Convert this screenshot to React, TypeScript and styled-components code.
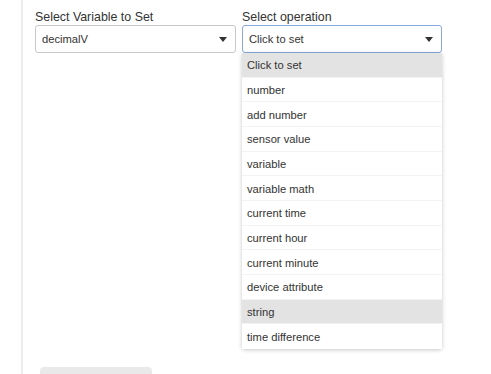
import styled, { createGlobalStyle } from "styled-components";

const GlobalStyle = createGlobalStyle`
  html, body {
    margin: 0;
    padding: 0;
    background: #ffffff;
    font-family: "Liberation Sans", Arial, sans-serif;
    color: #333333;
  }
`;

const Page = styled.div`
  height: 374px;
  overflow: hidden;
  margin-left: 21px;
  border-left: 2px solid #ececec;
  padding: 9px 0 0 12px;
`;

const Row = styled.div`
  display: grid;
  grid-template-columns: 201px 200px;
  column-gap: 6px;
`;

const Field = styled.div`
  position: relative;
  display: flex;
  flex-direction: column;
`;

const Label = styled.label`
  font-size: 12.4px;
  line-height: 16px;
  color: #333;
`;

const SelectBox = styled.div<{ focused?: boolean }>`
  height: 28px;
  box-sizing: border-box;
  border: 1px solid ${({ focused }) => (focused ? "#88a9dd" : "#c8c8c8")};
  border-radius: 3px;
  display: flex;
  align-items: center;
  justify-content: space-between;
  padding: 0 8px 0 6px;
  font-size: 11.2px;
  color: #333;
  background: #fff;
`;

const Caret = styled.span`
  width: 0;
  height: 0;
  border-left: 4px solid transparent;
  border-right: 4px solid transparent;
  border-top: 5px solid #333;
`;

const Menu = styled.ul`
  position: absolute;
  top: 44px;
  left: 0;
  right: 0;
  margin: 0;
  padding: 0;
  list-style: none;
  background: #fff;
  border-radius: 0 0 3px 3px;
  box-shadow: 0 1px 4px rgba(0, 0, 0, 0.22);
  z-index: 2;
`;

const Option = styled.li<{ active?: boolean }>`
  height: 24.67px;
  box-sizing: border-box;
  display: flex;
  align-items: center;
  padding: 1px 0 0 5px;
  font-size: 11.2px;
  color: #333;
  background: ${({ active }) => (active ? "#e3e3e3" : "#fff")};
  border-bottom: 1px solid #f3f3f3;
  &:last-child {
    border-bottom: none;
  }
`;

const GhostButton = styled.div`
  margin: 314px 0 0 5px;
  width: 112px;
  height: 30px;
  background: #e9e9e9;
  border-radius: 4px;
`;

const options = [
  "Click to set",
  "number",
  "add number",
  "sensor value",
  "variable",
  "variable math",
  "current time",
  "current hour",
  "current minute",
  "device attribute",
  "string",
  "time difference",
];

const highlighted = ["Click to set", "string"];

export default function App() {
  return (
    <>
      <GlobalStyle />
      <Page>
        <Row>
          <Field>
            <Label>Select Variable to Set</Label>
            <SelectBox>
              <span>decimalV</span>
              <Caret />
            </SelectBox>
          </Field>
          <Field>
            <Label>Select operation</Label>
            <SelectBox focused>
              <span>Click to set</span>
              <Caret />
            </SelectBox>
            <Menu>
              {options.map((o) => (
                <Option key={o} active={highlighted.includes(o)}>
                  {o}
                </Option>
              ))}
            </Menu>
          </Field>
        </Row>
        <GhostButton />
      </Page>
    </>
  );
}
